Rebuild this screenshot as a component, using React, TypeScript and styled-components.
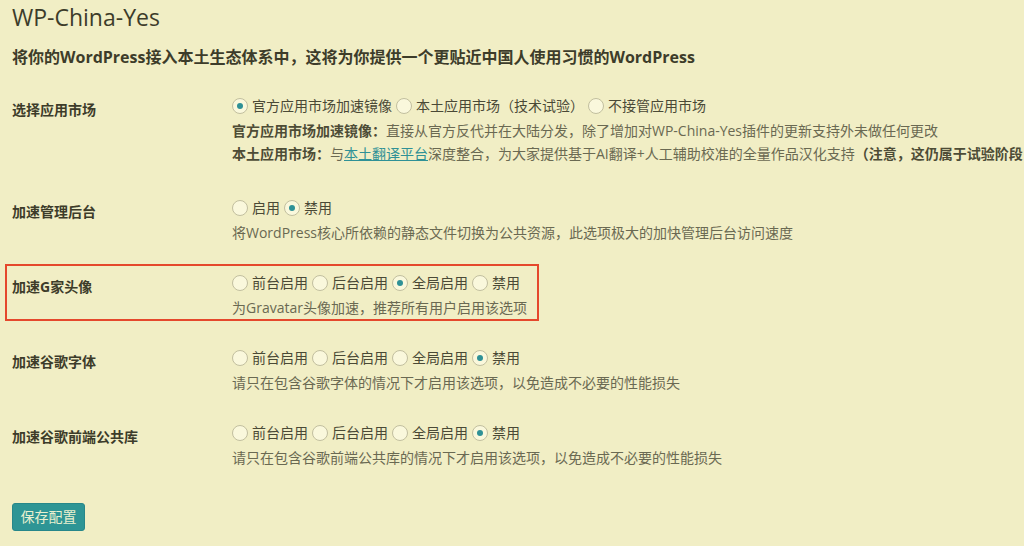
import React from 'react';
import styled, { createGlobalStyle } from 'styled-components';

const palette = {
  bg: '#f1eec5',
  text: '#3d3c2a',
  desc: '#6a6952',
  radioBorder: '#c2bf9f',
  radioFill: '#faf8dc',
  teal: '#2f9196',
  red: '#e5482c',
};

const GlobalStyle = createGlobalStyle`
  html, body {
    margin: 0;
    padding: 0;
    background: ${palette.bg};
  }
  body {
    font-family: "Open Sans", "Noto Sans CJK SC", sans-serif;
    color: ${palette.text};
  }
`;

const Page = styled.div`
  width: 1024px;
  height: 546px;
  box-sizing: border-box;
  padding: 3px 12px 0;
  overflow: hidden;
  background: ${palette.bg};
`;

const Title = styled.h1`
  margin: 0;
  font-size: 23px;
  line-height: 29px;
  font-weight: 400;
  color: ${palette.text};
`;

const Heading = styled.h2`
  margin: 13px 0 0;
  font-size: 16px;
  line-height: 24px;
  font-weight: 700;
  white-space: nowrap;
`;

const Table = styled.div`
  margin-top: 9px;
  display: flex;
  flex-direction: column;
`;

const Row = styled.div`
  position: relative;
  display: grid;
  grid-template-columns: 220px 1fr;
  padding: 15px 0 11px;
`;

const Highlight = styled.div`
  position: absolute;
  left: -7px;
  top: 9px;
  width: 534px;
  height: 57px;
  box-sizing: border-box;
  border: 2px solid ${palette.red};
  pointer-events: none;
`;

const Label = styled.div`
  padding-top: 4px;
  font-size: 14px;
  line-height: 26px;
  font-weight: 700;
  white-space: nowrap;
`;

const Field = styled.div`
  min-width: 0;
`;

const Options = styled.div`
  display: flex;
  align-items: center;
  height: 26px;
  white-space: nowrap;
`;

const Option = styled.label`
  display: inline-flex;
  align-items: center;
  margin-right: 4px;
  font-size: 14px;
  line-height: 26px;
  color: #4a4936;
`;

const Radio = styled.input.attrs({ type: 'radio', readOnly: true })`
  appearance: none;
  -webkit-appearance: none;
  margin: 0 4px 0 0;
  width: 16px;
  height: 16px;
  box-sizing: border-box;
  border-radius: 50%;
  border: 1px solid ${palette.radioBorder};
  background: ${palette.radioFill};
  display: inline-grid;
  place-items: center;

  &:checked::before {
    content: '';
    width: 6px;
    height: 6px;
    border-radius: 50%;
    background: ${palette.teal};
  }
`;

const Desc = styled.div<{ $extra?: number }>`
  font-size: 14px;
  line-height: 23px;
  color: ${palette.desc};
  white-space: nowrap;
  padding-bottom: ${(p) => p.$extra ?? 0}px;

  b {
    font-weight: 700;
    color: #4d4c36;
  }

  a {
    color: ${palette.teal};
    text-decoration: underline;
  }
`;

const SaveButton = styled.button`
  margin-top: 23px;
  height: 28px;
  width: 73px;
  padding: 0;
  border: 1px solid #27878a;
  border-radius: 3px;
  background: #2e9595;
  color: #e9f0cf;
  font-family: "Open Sans", "Noto Sans CJK SC", sans-serif;
  font-size: 14px;
  line-height: 26px;
`;

type Setting = {
  label: string;
  options: string[];
  checked: number;
  desc: React.ReactNode;
  extra?: number;
  highlight?: boolean;
};

const fourWay = ['前台启用', '后台启用', '全局启用', '禁用'];

const settings: Setting[] = [
  {
    label: '选择应用市场',
    options: ['官方应用市场加速镜像', '本土应用市场（技术试验）', '不接管应用市场'],
    checked: 0,
    extra: 4,
    desc: (
      <>
        <div>
          <b>官方应用市场加速镜像：</b>直接从官方反代并在大陆分发，除了增加对WP-China-Yes插件的更新支持外未做任何更改
        </div>
        <div>
          <b>本土应用市场：</b>与<a href="#">本土翻译平台</a>
          深度整合，为大家提供基于AI翻译+人工辅助校准的全量作品汉化支持
          <b>（注意，这仍属于试验阶段，可能会有不准确的翻译）</b>
        </div>
      </>
    ),
  },
  {
    label: '加速管理后台',
    options: ['启用', '禁用'],
    checked: 1,
    desc: '将WordPress核心所依赖的静态文件切换为公共资源，此选项极大的加快管理后台访问速度',
  },
  {
    label: '加速G家头像',
    options: fourWay,
    checked: 2,
    highlight: true,
    desc: '为Gravatar头像加速，推荐所有用户启用该选项',
  },
  {
    label: '加速谷歌字体',
    options: fourWay,
    checked: 3,
    desc: '请只在包含谷歌字体的情况下才启用该选项，以免造成不必要的性能损失',
  },
  {
    label: '加速谷歌前端公共库',
    options: fourWay,
    checked: 3,
    desc: '请只在包含谷歌前端公共库的情况下才启用该选项，以免造成不必要的性能损失',
  },
];

function App() {
  return (
    <>
      <GlobalStyle />
      <Page>
        <Title>WP-China-Yes</Title>
        <Heading>将你的WordPress接入本土生态体系中，这将为你提供一个更贴近中国人使用习惯的WordPress</Heading>
        <Table>
          {settings.map((s, i) => (
            <Row key={s.label}>
              {s.highlight && <Highlight />}
              <Label>{s.label}</Label>
              <Field>
                <Options>
                  {s.options.map((o, j) => (
                    <Option key={o}>
                      <Radio name={`opt-${i}`} checked={j === s.checked} />
                      {o}
                    </Option>
                  ))}
                </Options>
                <Desc $extra={s.extra}>{s.desc}</Desc>
              </Field>
            </Row>
          ))}
        </Table>
        <SaveButton type="button">保存配置</SaveButton>
      </Page>
    </>
  );
}

export default App;
